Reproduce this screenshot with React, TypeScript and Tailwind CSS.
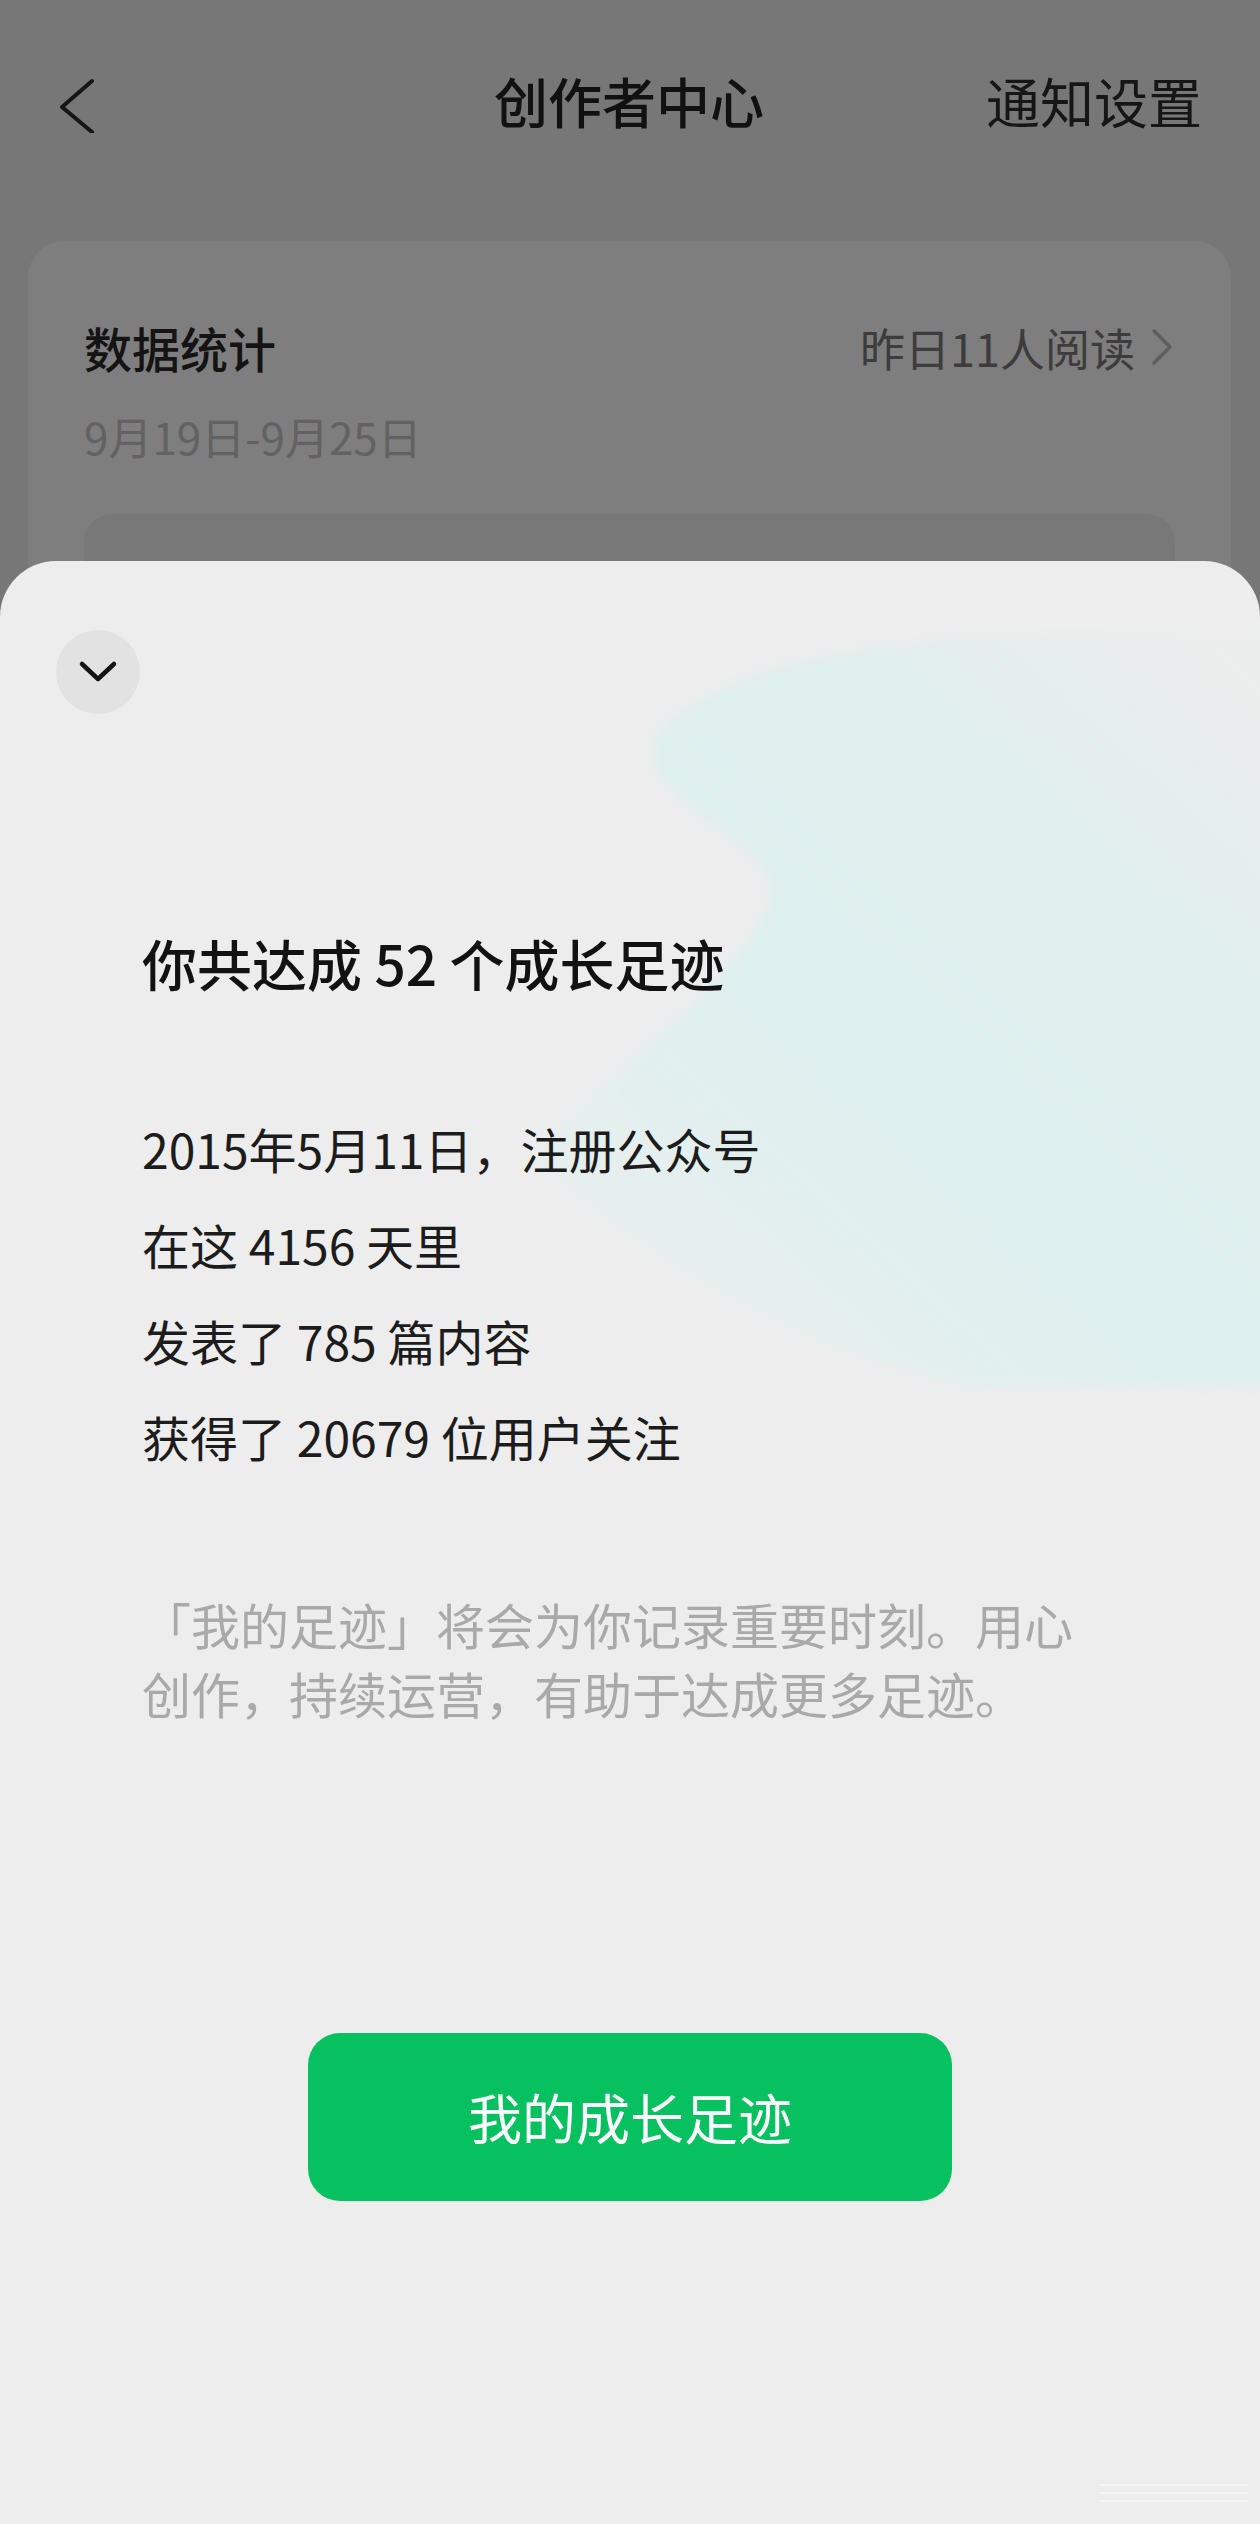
import React from "react";

const FONT = { fontFamily: '"Noto Sans CJK SC", "Noto Sans", sans-serif' };

export default function App() {
  return (
    <div
      className="relative w-[1260px] h-[2524px] overflow-hidden bg-[#777777]"
      style={FONT}
    >
      {/* Header */}
      <div className="grid grid-cols-3 items-center h-[202px] pl-[56px] pr-[58px]">
        <div className="flex items-center">
          <svg width="44" height="64" viewBox="0 0 44 64" fill="none">
            <path
              d="M36 12 L6 38 L36 63"
              stroke="#161616"
              strokeWidth="4"
              strokeLinecap="round"
              strokeLinejoin="round"
            />
          </svg>
        </div>
        <div className="text-center text-[54px] leading-none font-medium text-[#111111] whitespace-nowrap">
          创作者中心
        </div>
        <div className="text-right text-[54px] leading-none text-[#161616] whitespace-nowrap">
          通知设置
        </div>
      </div>

      {/* Card behind the sheet */}
      <div className="mt-[39px] ml-[28px] mr-[29px] rounded-[36px] bg-[#7e7e7e] px-[56px] pt-[77px] pb-[40px]">
        <div className="flex items-center justify-between h-[58px]">
          <div className="text-[48px] leading-none font-medium text-[#141414]">数据统计</div>
          <div className="flex items-center gap-[14px]">
            <span className="text-[45px] leading-none text-[#3c3c3c]">昨日11人阅读</span>
            <svg width="26" height="38" viewBox="0 0 26 38" fill="none">
              <path d="M5 3 L21 19 L5 35" stroke="#5e5e5e" strokeWidth="3.5" strokeLinecap="round" strokeLinejoin="round" />
            </svg>
          </div>
        </div>
        <div className="mt-[33px] h-[53px] flex items-center text-[44px] leading-none text-[#626262]">
          9月19日-9月25日
        </div>
        <div className="mt-[52px] h-[240px] rounded-[28px] bg-[#787878]" />
      </div>

      {/* Bottom sheet */}
      <div className="absolute left-0 right-0 top-[561px] bottom-0 rounded-t-[56px] bg-[#ededed] overflow-hidden">
        {/* decorative blob */}
        <svg
          className="absolute left-0 top-0"
          width="1260"
          height="900"
          viewBox="0 0 1260 900"
        >
          <defs>
            <linearGradient id="blobg" x1="0.9" y1="0" x2="0.1" y2="0.9">
              <stop offset="0" stopColor="#dfeeee" stopOpacity="0.1" />
              <stop offset="0.3" stopColor="#dcefee" stopOpacity="0.85" />
              <stop offset="0.6" stopColor="#ddf0ef" stopOpacity="1" />
              <stop offset="1" stopColor="#e2f0ef" stopOpacity="0.45" />
            </linearGradient>
            <filter id="blobblur" x="-10%" y="-10%" width="120%" height="120%">
              <feGaussianBlur stdDeviation="7" />
            </filter>
          </defs>
          <path
            d="M1270 70 C 1100 70, 900 70, 770 110 C 680 140, 640 175, 655 205 C 680 255, 755 275, 772 330 C 760 400, 640 480, 530 597 C 650 700, 800 790, 965 826 L 1270 826 Z"
            fill="url(#blobg)"
            filter="url(#blobblur)"
          />
        </svg>

        <div className="relative flex flex-col">
          {/* collapse button */}
          <div className="pt-[69px] pl-[56px]">
            <div className="w-[84px] h-[84px] rounded-full bg-[#e2e2e2] flex items-center justify-center">
              <svg width="40" height="26" viewBox="0 0 40 26" fill="none">
                <path d="M4 5 L20 20 L36 5" stroke="#141414" strokeWidth="4.5" strokeLinecap="round" strokeLinejoin="round" />
              </svg>
            </div>
          </div>

          <div className="pl-[142px]">
            <div className="mt-[213px] h-[70px] flex items-center text-[55px] leading-none font-medium text-[#121212] whitespace-nowrap">
              你共达成 52 个成长足迹
            </div>

            <div className="mt-[103px] flex flex-col text-[48px] leading-[96px] text-[#1c1c1c]">
              <div>2015年5月11日，注册公众号</div>
              <div>在这 4156 天里</div>
              <div>发表了 785 篇内容</div>
              <div>获得了 20679 位用户关注</div>
            </div>

            <p className="mt-[105px] w-[950px] text-[49px] leading-[69px] text-[#a9a9a9]">
              「我的足迹」将会为你记录重要时刻。用心创作，持续运营，有助于达成更多足迹。
            </p>
          </div>

          <div className="mt-[306px] flex justify-center">
            <div className="w-[644px] h-[168px] rounded-[32px] bg-[#07c160] flex items-center justify-center text-[54px] leading-none text-white">
              我的成长足迹
            </div>
          </div>
        </div>

        {/* faint marks bottom-right */}
        <div className="absolute right-[12px] bottom-[22px] flex flex-col gap-[6px] opacity-50">
          <div className="w-[148px] h-[2px] bg-white" />
          <div className="w-[148px] h-[2px] bg-white" />
          <div className="w-[148px] h-[2px] bg-white" />
        </div>
      </div>
    </div>
  );
}
